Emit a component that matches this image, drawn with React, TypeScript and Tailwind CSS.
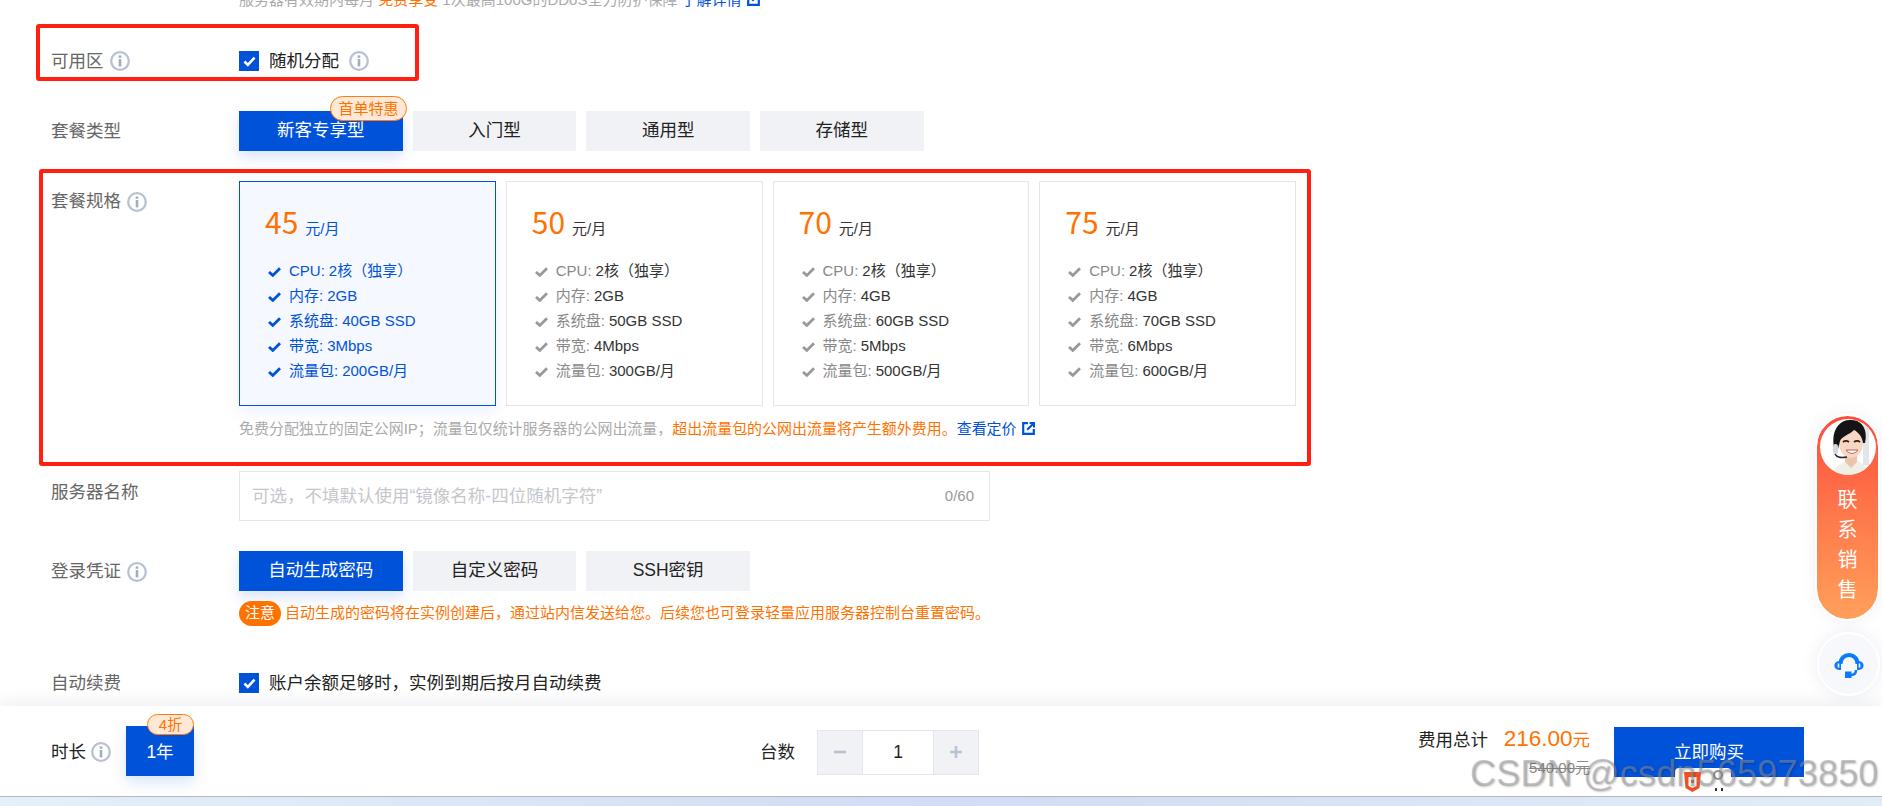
const FONT = "font-['Liberation_Sans','Noto_Sans_CJK_SC',sans-serif]";

const plans = [
  { price: 45, disk: "40GB", mem: "2GB", band: "3Mbps", traffic: "200GB" },
  { price: 50, disk: "50GB", mem: "2GB", band: "4Mbps", traffic: "300GB" },
  { price: 70, disk: "60GB", mem: "4GB", band: "5Mbps", traffic: "500GB" },
  { price: 75, disk: "70GB", mem: "4GB", band: "6Mbps", traffic: "600GB" },
];

const InfoIcon = ({ className = "" }: { className?: string }) => (
  <svg viewBox="0 0 20 20" className={`w-5 h-5 shrink-0 ${className}`}>
    <circle cx="10" cy="10" r="8.8" fill="none" stroke="#b6c1d2" strokeWidth="2.3" />
    <rect x="8.7" y="4.4" width="2.6" height="2.4" fill="#9fadc3" />
    <rect x="8.7" y="8" width="2.6" height="7.4" fill="#9fadc3" />
  </svg>
);

const Check = ({ color }: { color: string }) => (
  <svg viewBox="0 0 13 10" className="w-[13px] h-[10px] shrink-0">
    <path d="M1 5 L4.8 8.4 L12 1.2" fill="none" stroke={color} strokeWidth="2.8" />
  </svg>
);

const CheckBox = () => (
  <span className="w-5 h-5 bg-[#0052d9] flex items-center justify-center shrink-0">
    <svg viewBox="0 0 14 12" className="w-[13px] h-[11px]">
      <path d="M1.5 6 L5.2 9.8 L12.5 1.8" fill="none" stroke="#fff" strokeWidth="2.8" />
    </svg>
  </span>
);

const ExternalLink = () => (
  <svg viewBox="0 0 13 13" className="inline-block w-[13px] h-[13px] ml-[5px] align-[-1px]">
    <path d="M6 1.2 H1.2 V11.8 H11.8 V7" fill="none" stroke="#0052d9" strokeWidth="2.2" />
    <path d="M5.2 7.8 L11.5 1.5 M7.6 1 H12 V5.4" fill="none" stroke="#0052d9" strokeWidth="2.2" />
  </svg>
);

const Tab = ({ label, active }: { label: string; active?: boolean }) => (
  <button
    className={`w-[163.67px] h-10 text-[17.5px] leading-none ${
      active
        ? "bg-[#0052d9] text-white shadow-[0_6px_14px_rgba(0,82,217,0.16)]"
        : "bg-[#f0f2f6] text-[#222]"
    }`}
  >
    {label}
  </button>
);

const Badge = ({ children, className }: { children: string; className: string }) => (
  <span
    className={`absolute flex items-center justify-center rounded-full bg-[#ffe8d6] border border-[#ff7a0f] text-[#ff7200] text-[15px] leading-none ${className}`}
  >
    {children}
  </span>
);

const SpecRow = ({ name, value, active }: { name: string; value: string; active: boolean }) => (
  <li className="flex items-center h-[25px] text-[15px]">
    <Check color={active ? "#0052d9" : "#999999"} />
    <span className={`ml-2 ${active ? "text-[#0052d9]" : "text-[#888]"}`}>{name}: </span>
    <span className={`ml-1 ${active ? "text-[#0052d9]" : "text-[#333]"}`}>{value}</span>
  </li>
);

const PlanCard = ({ plan, active }: { plan: (typeof plans)[number]; active: boolean }) => (
  <div
    className={`flex-1 h-[225px] border pl-[25px] pt-[21px] ${
      active
        ? "bg-[#f5f8ff] border-[#0052d9] shadow-[0_6px_14px_rgba(0,82,217,0.08)]"
        : "bg-white border-[#e3e6eb]"
    }`}
  >
    <div className="flex items-baseline h-9">
      <span className="text-[30px] leading-9 text-[#ff7200] font-['Noto_Sans_CJK_SC',sans-serif]">{plan.price}</span>
      <span className={`ml-[7px] text-[15px] ${active ? "text-[#0052d9]" : "text-[#333]"}`}>元/月</span>
    </div>
    <ul className="mt-[20px] pl-[3px]">
      <SpecRow name="CPU" value="2核（独享）" active={active} />
      <SpecRow name="内存" value={plan.mem} active={active} />
      <SpecRow name="系统盘" value={`${plan.disk} SSD`} active={active} />
      <SpecRow name="带宽" value={plan.band} active={active} />
      <SpecRow name="流量包" value={`${plan.traffic}/月`} active={active} />
    </ul>
  </div>
);

const Label = ({ text, info, className = "" }: { text: string; info?: boolean; className?: string }) => (
  <div className={`w-[188px] shrink-0 flex items-center gap-[6px] h-[25px] text-[17.5px] text-[#666] ${className}`}>
    {text}
    {info && <InfoIcon />}
  </div>
);

const Avatar = () => (
  <svg viewBox="0 0 56 56" className="w-14 h-14 rounded-full bg-white">
    <g className="blur-[0.5px]">
      <rect x="43" y="0" width="6" height="46" fill="#e2e6e8" />
      <path d="M13 56 C14 48 20 45 26 43 L38 42 C43 45 47 48 48 56 Z" fill="#efeee7" />
      <path d="M25 34 h12 v9 l-6 6 l-6 -6 Z" fill="#ecc4ab" />
      <ellipse cx="31" cy="24" rx="12" ry="15" fill="#f7d6c3" />
      <path d="M15 32 C9 12 20 0 31 1 C42 1 48 10 45 24 L43 24 C42 17 38 13 34 11 C29 16 22 17 20 22 L18 30 Z" fill="#141417" />
      <path d="M23 23 C25 21.5 27 21.5 29 23 M34 23 C36 21.5 38 21.5 40 23" fill="none" stroke="#2e2320" strokeWidth="1.8" />
      <path d="M26 31 C29 35.5 35 35.5 38 31 Z" fill="#fff" stroke="#c25a58" strokeWidth="1" />
      <rect x="13" y="25" width="5" height="10" rx="2.5" fill="#d4d8dc" />
      <path d="M15 35 C17 39 21 39 27 38" fill="none" stroke="#26262a" strokeWidth="1.5" />
    </g>
  </svg>
);

const Headset = () => (
  <svg viewBox="0 0 30 27" className="w-[30px] h-[27px]">
    <path d="M6.5 13 C6.5 1 23.5 1 23.5 13" fill="none" stroke="#0b7aff" strokeWidth="4" />
    <path d="M7 10 C2 10 0.5 12 0.5 14.5 C0.5 17 2 19 7 19 Z M23 10 C28 10 29.5 12 29.5 14.5 C29.5 17 28 19 23 19 Z" fill="#0b7aff" />
    <path d="M4.5 12.5 v4 M25.5 12.5 v4" stroke="#fff" strokeWidth="1.6" />
    <path d="M22 19 C22 23 20 24 17 24" fill="none" stroke="#0b7aff" strokeWidth="2.4" />
    <rect x="11" y="20.5" width="6.5" height="6.5" fill="#0b7aff" />
  </svg>
);

const App = () => {
  return (
    <div className={`h-screen w-full flex flex-col overflow-hidden relative bg-white ${FONT}`}>
      <main className="flex-1 min-h-0 pl-[51px] overflow-hidden">
        <div className="ml-[188px] h-5 -mt-[10px] text-[15px] leading-5 text-[#aaa] whitespace-nowrap">
          服务器有效期内每月 <span className="text-[#ff7200]">免费享受</span> 1次最高100G的DDoS全力防护保障{" "}
          <span className="text-[#0052d9]">了解详情</span>
          <ExternalLink />
        </div>

        <div className="flex items-center h-5 mt-[41px]">
          <Label text="可用区" info />
          <CheckBox />
          <span className="ml-[10px] text-[17.5px] text-[#222]">随机分配</span>
          <InfoIcon className="ml-[10px]" />
        </div>

        <div className="flex items-center mt-10">
          <Label text="套餐类型" />
          <div className="flex gap-[10px] relative">
            <Tab label="新客专享型" active />
            <Badge className="left-[91px] -top-[15px] w-[77px] h-[25px]">首单特惠</Badge>
            <Tab label="入门型" />
            <Tab label="通用型" />
            <Tab label="存储型" />
          </div>
        </div>

        <div className="flex mt-[30px]">
          <Label text="套餐规格" info className="mt-[8px]" />
          <div className="w-[1057px]">
            <div className="flex gap-[10px]">
              {plans.map((plan, i) => (
                <PlanCard key={plan.price} plan={plan} active={i === 0} />
              ))}
            </div>
            <p className="mt-[13px] text-[14.97px] leading-5 text-[#aaa] whitespace-nowrap">
              免费分配独立的固定公网IP；流量包仅统计服务器的公网出流量，
              <span className="text-[#ff7200]">超出流量包的公网出流量将产生额外费用。</span>
              <span className="text-[#0052d9]">查看定价</span>
              <ExternalLink />
            </p>
          </div>
        </div>

        <div className="flex mt-[32px]">
          <Label text="服务器名称" className="mt-[9px]" />
          <div className="w-[751px] h-[50px] border border-[#e3e6eb] flex items-center justify-between pl-3 pr-[15px]">
            <span className="text-[17.5px] text-[#c4c7cc]">可选，不填默认使用“镜像名称-四位随机字符”</span>
            <span className="text-[15px] text-[#999]">0/60</span>
          </div>
        </div>

        <div className="flex items-center mt-[30px]">
          <Label text="登录凭证" info className="mt-[1px]" />
          <div className="flex gap-[10px]">
            <Tab label="自动生成密码" active />
            <Tab label="自定义密码" />
            <Tab label="SSH密钥" />
          </div>
        </div>
        <div className="flex items-center ml-[188px] mt-[10px] gap-1 text-[15px] text-[#ff7200]">
          <span className="w-[42px] h-[25px] rounded-full bg-[#ff7200] text-white flex items-center justify-center">注意</span>
          自动生成的密码将在实例创建后，通过站内信发送给您。后续您也可登录轻量应用服务器控制台重置密码。
        </div>

        <div className="flex items-center h-5 mt-[47px]">
          <Label text="自动续费" className="mt-[1px]" />
          <CheckBox />
          <span className="ml-[10px] text-[17.5px] text-[#222]">账户余额足够时，实例到期后按月自动续费</span>
        </div>
      </main>

      <footer className="relative h-[90px] shrink-0 bg-white flex items-center pl-[51px] text-[17.5px] text-[#222] shadow-[0_-6px_12px_rgba(120,130,160,0.1)]">
        <span className="mt-[3px]">时长</span>
        <InfoIcon className="ml-[5px] mt-[1px]" />
        <div className="relative ml-[15px] w-[68px] h-[50px] pt-[2px] bg-[#0052d9] text-white flex items-center justify-center shadow-[0_6px_14px_rgba(0,82,217,0.16)]">
          1年
          <Badge className="right-0 -top-[12px] w-[47px] h-[21px]">4折</Badge>
        </div>

        <span className="ml-[566px] mt-[2px]">台数</span>
        <div className="ml-[22px] mt-[2px] flex w-[162px] h-[45px] border border-[#e3e6eb]">
          <span className="w-11 bg-[#f0f2f6] flex items-center justify-center">
            <svg viewBox="0 0 14 14" className="w-[14px] h-[14px]"><path d="M1 7 H13" stroke="#b9c2d2" strokeWidth="2.6" /></svg>
          </span>
          <span className="flex-1 border-x border-[#e3e6eb] flex items-center justify-center text-[17.5px]">1</span>
          <span className="w-11 bg-[#f0f2f6] flex items-center justify-center">
            <svg viewBox="0 0 14 14" className="w-[14px] h-[14px]"><path d="M1 7 H13 M7 1 V13" stroke="#b9c2d2" strokeWidth="2.6" /></svg>
          </span>
        </div>

        <div className="ml-[439px] mb-[3px] w-[172px] flex flex-col items-end">
          <div className="flex items-baseline justify-between w-full h-[26px]">
            <span>费用总计</span>
            <span className="text-[#ff7200]">
              <span className="text-[22.5px]">216.00</span>元
            </span>
          </div>
          <span className="mt-[10px] text-[15px] leading-5 text-[#888] line-through">540.00元</span>
        </div>
        <button className="ml-6 mt-[2px] w-[190px] h-[50px] bg-[#0052d9] text-white text-[17.5px]">立即购买</button>
      </footer>

      <div className="h-[10px] shrink-0 border-t border-[#b5bac4] bg-linear-to-r from-[#e6f0fa] via-[#d2dcf3] to-[#e3edf8]" />

      {/* annotation boxes drawn over the screenshot */}
      <div className="absolute left-[36px] top-6 w-[383px] h-[57px] border-4 border-[#ff2012] rounded-[3px] pointer-events-none" />
      <div className="absolute left-[39px] top-[169px] w-[1272px] h-[297px] border-4 border-[#ff2012] rounded-[3px] pointer-events-none" />

      {/* floating contact widget */}
      <div className="absolute left-[1817px] top-[416px] w-[61px] h-[203px] rounded-full bg-linear-to-b from-[#ff4a3d] to-[#ff9f5a] outline-2 outline-white shadow-[0_0_16px_rgba(120,130,160,0.14)] flex flex-col items-center pt-[3px]">
        <Avatar />
        <div className="mt-[10px] text-white text-[20px] leading-[30px] w-5 text-center">联系销售</div>
      </div>
      <div className="absolute left-[1817px] top-[632px] w-[63px] h-[64px] rounded-full bg-[#f6f8fc] border-2 border-white shadow-[0_0_16px_rgba(120,130,160,0.14)] flex items-center justify-center">
        <Headset />
      </div>

      {/* browser popup peeking in at the bottom */}
      <div className="absolute left-[1675px] top-[768px] w-[56px] h-7 bg-white rounded-t-sm">
        <svg viewBox="0 0 17 20" className="absolute left-[9px] top-1 w-[17px] h-5">
          <path d="M0 0 H17 L15.5 16 L8.5 20 L1.5 16 Z" fill="#f04e23" />
          <path d="M4.5 5 H12.5 V14 L8.5 16 L4.5 14 Z M7 8 v3 h3 v-3 Z" fill="#fff" />
        </svg>
        <span className="absolute left-[38px] top-[2px] w-[10px] h-[10px] rounded-full border-2 border-[#8f9499]" />
        <span className="absolute left-[40px] top-[20px] w-[2px] h-[3px] bg-[#333]" />
        <span className="absolute left-[46px] top-[20px] w-[2px] h-[3px] bg-[#333]" />
      </div>

      {/* CSDN watermark */}
      <div className="absolute left-[1470px] top-[754px] text-[36px] leading-10 tracking-[0.2px] font-['Liberation_Sans',sans-serif] text-[rgba(150,150,150,0.5)] [text-shadow:1px_1px_2px_rgba(0,0,0,0.22)] whitespace-nowrap pointer-events-none">
        CSDN @csdn565973850
      </div>
    </div>
  );
};

export default App;
